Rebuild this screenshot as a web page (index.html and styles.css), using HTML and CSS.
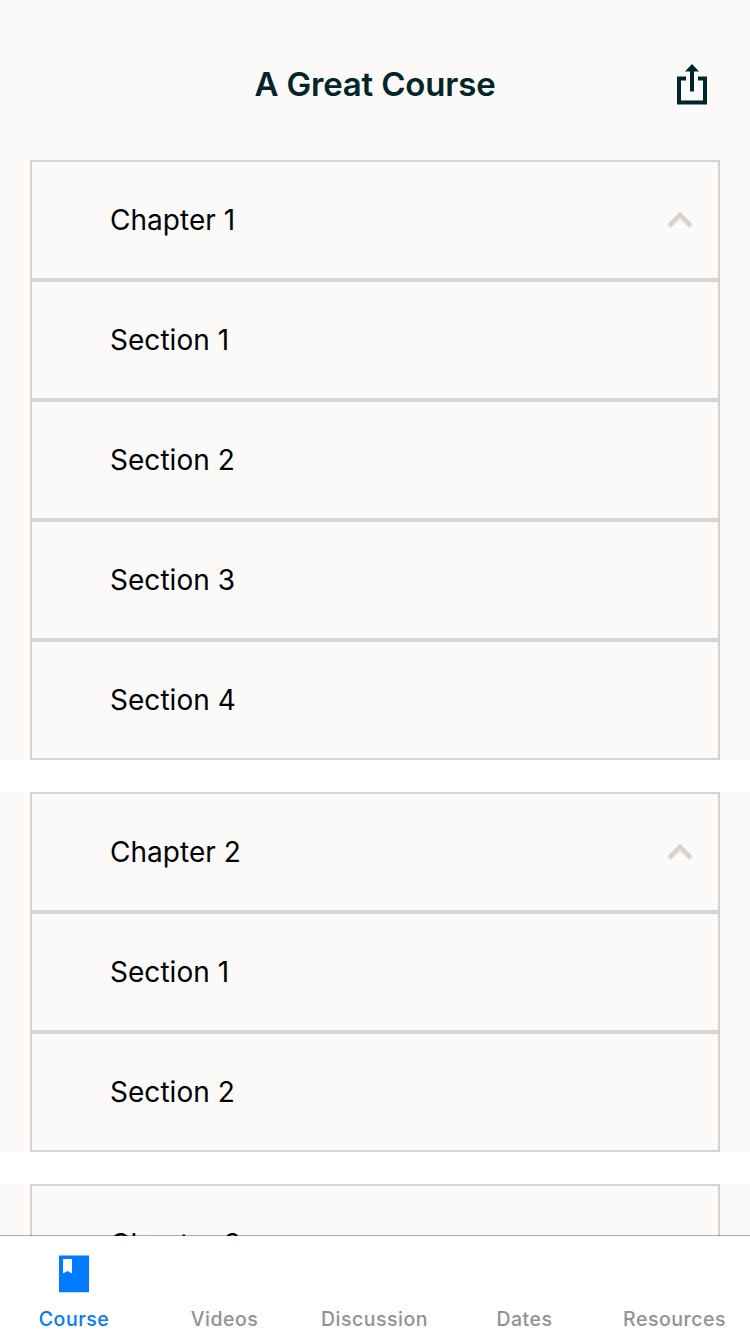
FILE: index.html
```html
<!DOCTYPE html>
<html lang="en">
<head>
<meta charset="utf-8">
<title>A Great Course</title>
<link rel="stylesheet" href="styles.css">
</head>
<body>
<div class="app">
  <header class="header">
    <h1 class="title">A Great Course</h1>
    <svg class="share" width="32" height="42" viewBox="0 0 32 42"><path d="M10 14.5H3V38.5H29V14.5H22M16 27.5V5" fill="none" stroke="#00262b" stroke-width="4"/><path d="M9 7.5L16 0L23 7.5Z" fill="#00262b"/></svg>
  </header>
  <main class="content">
    <section class="group">
      <div class="row"><span>Chapter 1</span><svg class="chevron" width="26" height="16" viewBox="0 0 26 16"><path d="M2 14L13 3L24 14" fill="none" stroke="#d6d3d1" stroke-width="4.8"/></svg></div>
      <div class="row">Section 1</div>
      <div class="row">Section 2</div>
      <div class="row">Section 3</div>
      <div class="row">Section 4</div>
    </section>
    <section class="group">
      <div class="row"><span>Chapter 2</span><svg class="chevron" width="26" height="16" viewBox="0 0 26 16"><path d="M2 14L13 3L24 14" fill="none" stroke="#d6d3d1" stroke-width="4.8"/></svg></div>
      <div class="row">Section 1</div>
      <div class="row">Section 2</div>
    </section>
    <section class="group">
      <div class="row"><span>Chapter 3</span></div>
    </section>
  </main>
  <nav class="tabs">
    <div class="tab active"><svg class="book" width="30" height="38" viewBox="0 0 30 38"><path d="M0 .5H30V37.3H0Z" fill="#007aff"/><path d="M4 4H13V18.5L8.5 16L4 18.5Z" fill="#fff"/></svg><span>Course</span></div>
    <div class="tab"><span>Videos</span></div>
    <div class="tab"><span>Discussion</span></div>
    <div class="tab"><span>Dates</span></div>
    <div class="tab"><span>Resources</span></div>
  </nav>
</div>
</body>
</html>
```
FILE: styles.css
```css
* { box-sizing: border-box; }
body { margin: 0; background: #fff; font-family: Inter, sans-serif; }
.app { width: 750px; height: 1334px; display: flex; flex-direction: column; overflow: hidden; }
.header { height: 160px; flex: none; background: #fcfaf8; display: grid; grid-template-columns: 1fr auto 1fr; align-items: start; padding: 64px 42px 0; }
.title { grid-column: 2; margin: 0; font-size: 33px; line-height: 41px; font-weight: 600; letter-spacing: -.18px; color: #00262b; }
.share { justify-self: end; }
.content { flex: 1; min-height: 0; overflow: hidden; display: flex; flex-direction: column; gap: 32px; }
.group { flex: none; padding: 0 30px; background: #fcfaf8; }
.row { height: 120px; padding: 0 25px 0 78px; border: 2px solid #d6d3d1; display: flex; align-items: center; justify-content: space-between; font-size: 28px; line-height: 40px; letter-spacing: .04px; color: #000; }
.tabs { position: relative; flex: none; height: 99px; margin-top: -1px; border-top: 1px solid rgba(0, 0, 0, .3); background: #fff; background-clip: padding-box; display: grid; grid-template-columns: repeat(5, 150px); }
.tab { display: flex; flex-direction: column; align-items: center; justify-content: flex-end; padding: 0 1px 3px 0; font-size: 19.5px; line-height: 24px; font-weight: 500; letter-spacing: .53px; color: #929292; }
.active { padding-right: 2px; color: #007aff; }
.book { margin-bottom: 14px; }
```
